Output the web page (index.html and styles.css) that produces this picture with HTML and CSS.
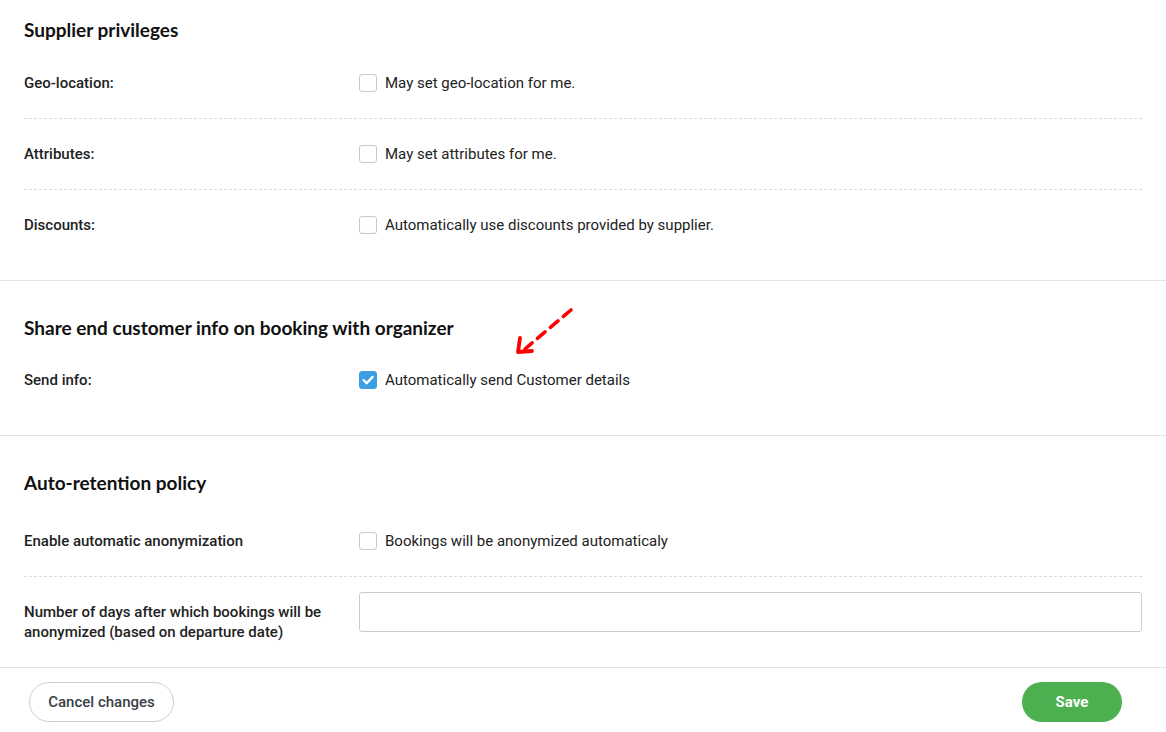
FILE: index.html
```html
<!DOCTYPE html>
<html lang="en">
<head>
<meta charset="utf-8">
<title>Settings</title>
<link rel="stylesheet" href="styles.css">
</head>
<body>
<div class="page">
  <section class="section section--first">
    <h2 class="section-title section-title--first">Supplier privileges</h2>
    <div class="row">
      <div class="row-label">Geo-location:</div>
      <label class="check"><span class="box"></span><span>May set geo-location for me.</span></label>
    </div>
    <div class="row">
      <div class="row-label">Attributes:</div>
      <label class="check"><span class="box"></span><span>May set attributes for me.</span></label>
    </div>
    <div class="row">
      <div class="row-label">Discounts:</div>
      <label class="check"><span class="box"></span><span>Automatically use discounts provided by supplier.</span></label>
    </div>
  </section>

  <section class="section">
    <h2 class="section-title">Share end customer info on booking with organizer</h2>
    <div class="row">
      <div class="row-label">Send info:</div>
      <label class="check"><span class="box box--checked"><svg viewBox="0 0 18 18" width="18" height="18"><path d="M4.6 9.2 L7.7 12.2 L13.6 5.9" fill="none" stroke="#fff" stroke-width="2.4" stroke-linecap="round" stroke-linejoin="round"/></svg></span><span>Automatically send Customer details</span></label>
    </div>
    <svg class="arrow" width="70" height="60" viewBox="0 0 70 60">
      <path d="M57 5 L11 44" fill="none" stroke="#f00" stroke-width="3.6" stroke-linecap="round" stroke-dasharray="10 7"/>
      <path d="M6 33 L4 47 L18 46" fill="none" stroke="#f00" stroke-width="3.8" stroke-linecap="round" stroke-linejoin="round"/>
    </svg>
  </section>

  <section class="section section--last">
    <h2 class="section-title section-title--wide">Auto-retention policy</h2>
    <div class="row">
      <div class="row-label">Enable automatic anonymization</div>
      <label class="check"><span class="box"></span><span>Bookings will be anonymized automaticaly</span></label>
    </div>
    <div class="row row--input">
      <div class="row-label">Number of days after which bookings will be anonymized (based on departure date)</div>
      <div class="field"><input class="input" type="text"></div>
    </div>
  </section>

  <footer class="footer">
    <button class="btn btn--cancel">Cancel changes</button>
    <button class="btn btn--save">Save</button>
  </footer>
</div>
</body>
</html>
```

FILE: styles.css
```css
* { box-sizing: border-box; }
html, body { margin: 0; padding: 0; background: #fff; }
body {
  font-family: Roboto, "Liberation Sans", sans-serif;
  font-size: 15px;
  color: #222;
}
.page { width: 1166px; height: 732px; overflow: hidden; }

.section {
  position: relative;
  padding: 35px 24px 20px;
  border-bottom: 1px solid #e4e4e4;
}
.section--first { padding-top: 18px; padding-bottom: 20px; }
.section--last { padding-bottom: 0; border-bottom: none; }

.section-title {
  margin: 0 0 5px;
  font-family: Lato, "Liberation Sans", sans-serif;
  font-weight: 700;
  font-size: 19px;
  line-height: 24px;
  color: #111;
}
.section-title--first { margin-bottom: 6px; }
.section-title--wide { margin-bottom: 11px; }

.row {
  display: grid;
  grid-template-columns: 335px 1fr;
  align-items: center;
  min-height: 71px;
  border-bottom: 1px dashed #dcdcdc;
}
.row:last-of-type { border-bottom: none; min-height: 70px; }

.row-label {
  font-weight: 500;
  font-size: 15px;
  line-height: 20px;
  color: #222;
  padding-right: 20px;
}

.check {
  display: flex;
  align-items: center;
  gap: 8px;
  font-size: 15px;
  line-height: 20px;
  color: #222;
}
.box {
  width: 18px;
  height: 18px;
  border: 1px solid #c8c8c8;
  border-radius: 3px;
  background: #fff;
  flex: none;
  display: block;
}
.box svg { display: block; }
.box--checked {
  background: #3d9ee4;
  border-color: #3d9ee4;
  position: relative;
}
.box--checked svg { position: absolute; left: -1px; top: -1px; }

.row--input { min-height: 90px; }
.field { padding: 15px 0 35px; }
.input {
  display: block;
  width: 783px;
  height: 40px;
  border: 1px solid #cccccc;
  border-radius: 3px;
  background: #fff;
  font: inherit;
  padding: 0 12px;
  outline: none;
}

.arrow {
  position: absolute;
  left: 514px;
  top: 24px;
}

.footer {
  display: flex;
  justify-content: space-between;
  align-items: center;
  border-top: 1px solid #e4e4e4;
  padding: 14px 44px 0 29px;
}
.btn {
  font-family: Roboto, "Liberation Sans", sans-serif;
  font-size: 15px;
  height: 40px;
  border-radius: 20px;
  cursor: pointer;
}
.btn--cancel {
  width: 145px;
  background: #fff;
  border: 1px solid #cfcfcf;
  color: #3a3f45;
  font-weight: 500;
}
.btn--save {
  width: 100px;
  background: #4caf50;
  border: none;
  color: #fff;
  font-weight: 700;
}
```
